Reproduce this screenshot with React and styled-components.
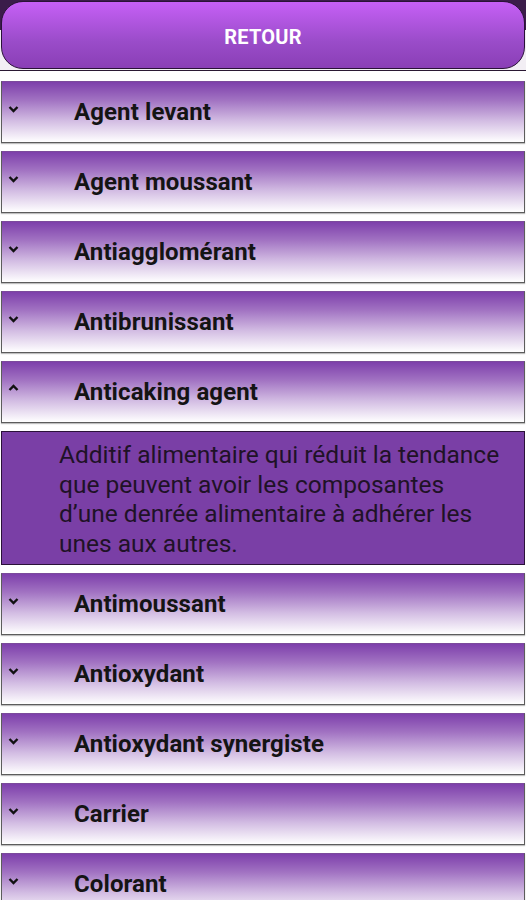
import React, { useState } from 'react'
import styled, { createGlobalStyle } from 'styled-components'

const GlobalStyle = createGlobalStyle`
  body {
    margin: 0;
    background: #ffffff;
    font-family: Roboto, "Liberation Sans", sans-serif;
  }
`

const Page = styled.div`
  width: 526px;
  height: 900px;
  overflow: hidden;
  background: #ffffff;
`

const Header = styled.div`
  background: linear-gradient(#3b1c4a 0, #3b1c4a 30px, #f2eef4 30px);
  border-bottom: 1px solid #2a1833;
  padding: 1px;
`

const BackButton = styled.button`
  display: block;
  width: 100%;
  height: 68px;
  padding-top: 4px;
  border: 1.5px solid #2a1238;
  border-radius: 22px;
  background: linear-gradient(#c660f6, #9a4cc9 60%, #8a3fb6);
  color: #ffffff;
  font-family: Roboto, "Liberation Sans", sans-serif;
  font-weight: 700;
  font-size: 20px;
  letter-spacing: 0.2px;
  cursor: pointer;
`

const List = styled.div`
  display: flex;
  flex-direction: column;
  gap: 8px;
  padding: 10px 1px 0 1px;
`

const Row = styled.div`
  display: flex;
  align-items: center;
  height: 62px;
  flex-shrink: 0;
  box-sizing: border-box;
  border: 1.5px solid #5c5c5c;
  border-top-color: #7b4a9c;
  background: linear-gradient(#7d3fab 0%, #a172c2 30%, #d3bde3 65%, #ffffff 100%);
  box-shadow: 0 1px 1px rgba(0, 0, 0, 0.25);
  cursor: pointer;
`

const Chevron = styled.span`
  width: 72px;
  padding-left: 6px;
  box-sizing: border-box;
  align-self: flex-start;
  padding-top: ${p => (p.$open ? '22px' : '24px')};
  display: flex;
`

const Title = styled.span`
  font-size: 24px;
  font-weight: 700;
  color: #141414;
  letter-spacing: 0.1px;
`

const Panel = styled.div`
  box-sizing: border-box;
  border: 1.5px solid #2a1238;
  background: #7a3fa6;
  padding: 8px 18px 6px 57px;
  font-size: 24.5px;
  line-height: 29.6px;
  color: #1f1227;
`

const items = [
  { title: 'Agent levant' },
  { title: 'Agent moussant' },
  { title: 'Antiagglomérant' },
  { title: 'Antibrunissant' },
  {
    title: 'Anticaking agent',
    text: 'Additif alimentaire qui réduit la tendance que peuvent avoir les composantes d’une denrée alimentaire à adhérer les unes aux autres.',
  },
  { title: 'Antimoussant' },
  { title: 'Antioxydant' },
  { title: 'Antioxydant synergiste' },
  { title: 'Carrier' },
  { title: 'Colorant' },
]

const Arrow = ({ open }) => (
  <svg width="11" height="7" viewBox="0 0 11 7">
    <polyline
      points={open ? '1.5,6 5.5,2 9.5,6' : '1.5,1 5.5,5 9.5,1'}
      fill="none"
      stroke="#111"
      strokeWidth="2.4"
    />
  </svg>
)

const App = () => {
  const [open, setOpen] = useState(4)

  return (
    <Page>
      <GlobalStyle />
      <Header>
        <BackButton>RETOUR</BackButton>
      </Header>
      <List>
        {items.map((item, i) => (
          <React.Fragment key={item.title}>
            <Row onClick={() => setOpen(open === i ? -1 : i)}>
              <Chevron $open={open === i}>
                <Arrow open={open === i} />
              </Chevron>
              <Title>{item.title}</Title>
            </Row>
            {open === i && item.text && <Panel>{item.text}</Panel>}
          </React.Fragment>
        ))}
      </List>
    </Page>
  )
}

export default App
